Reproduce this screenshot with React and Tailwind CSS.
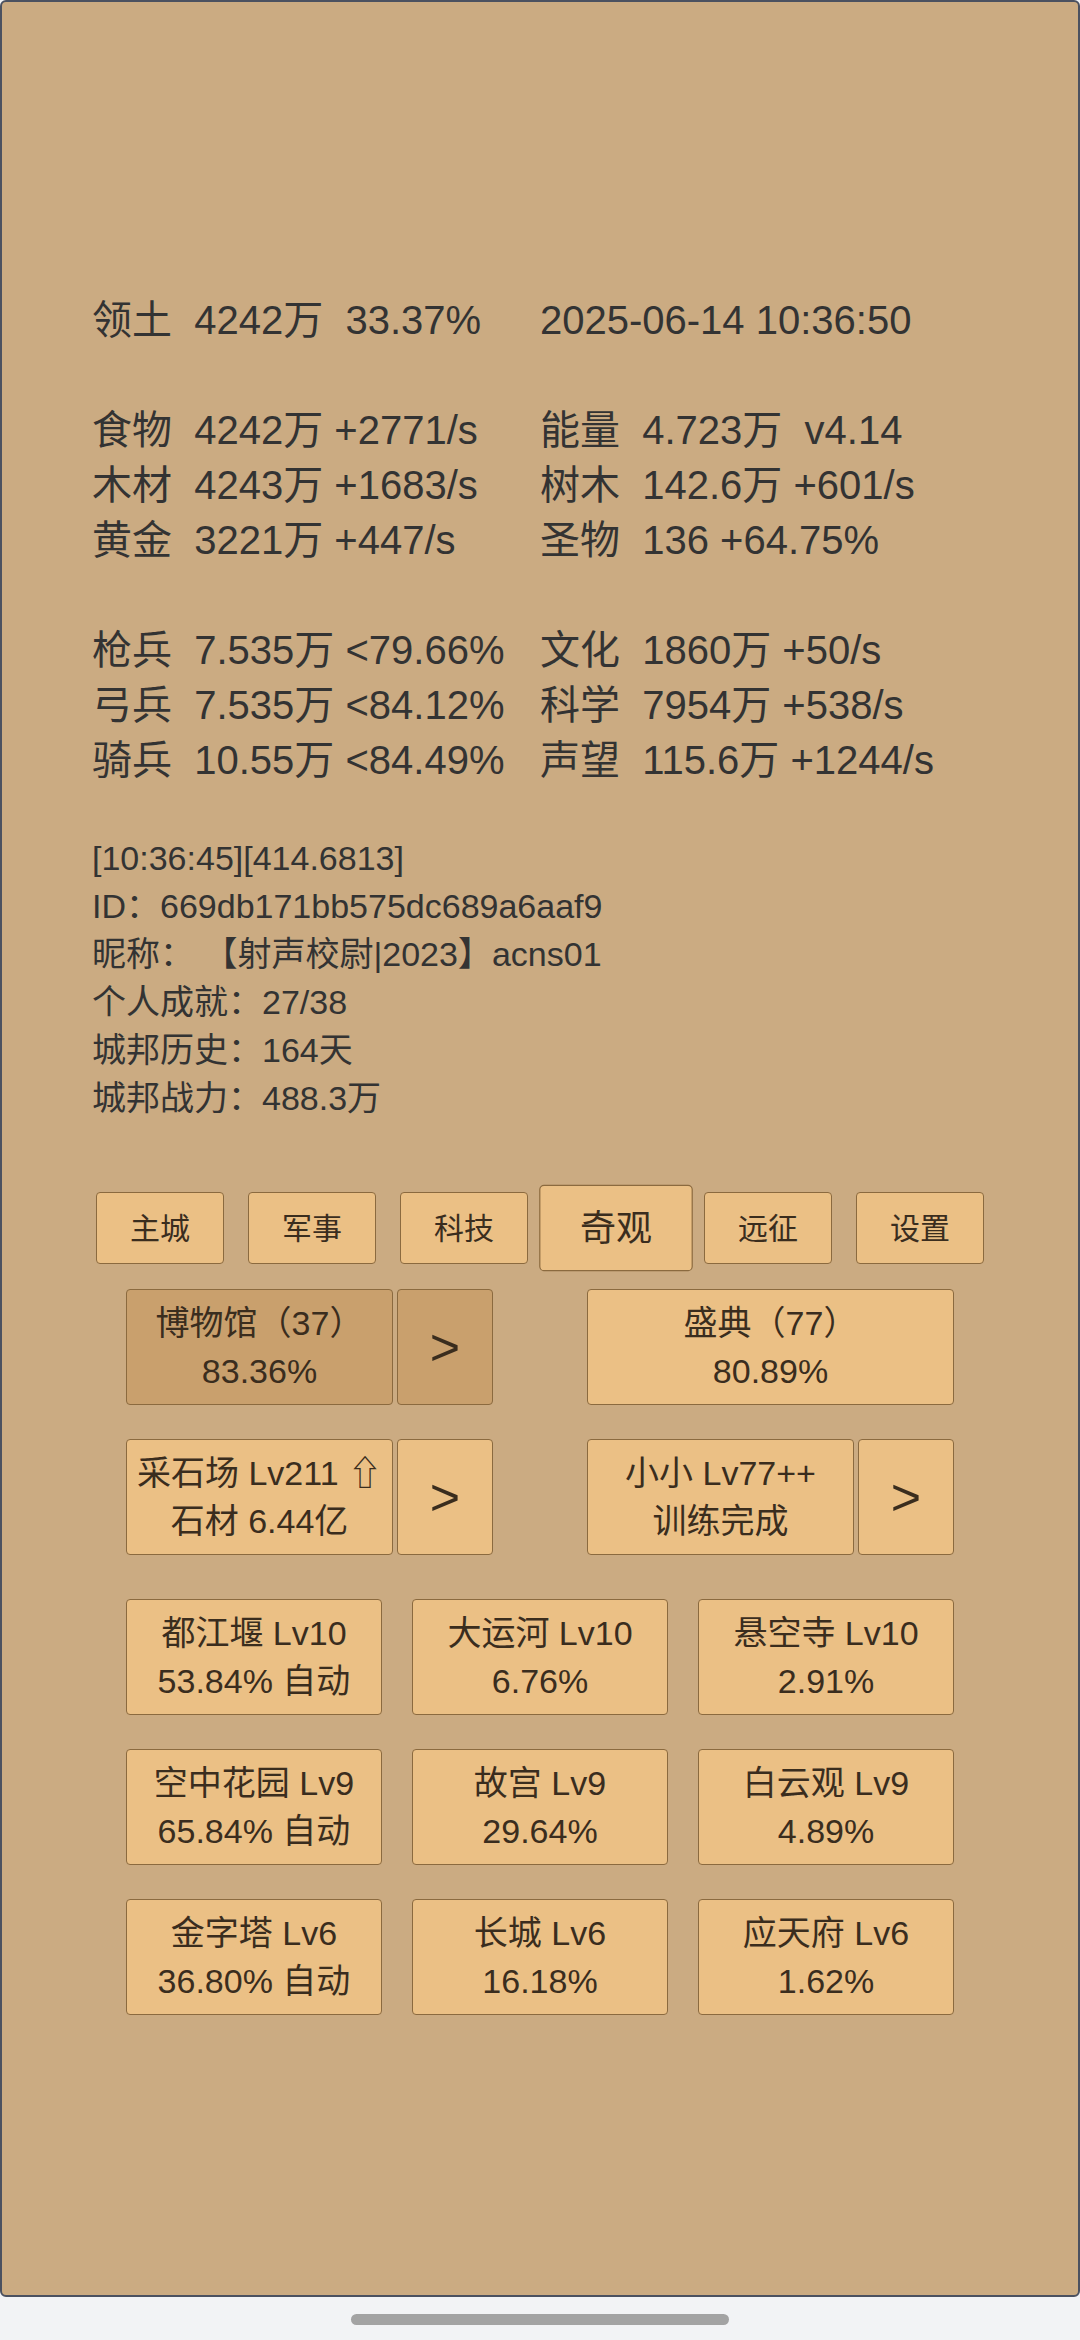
const font = { fontFamily: '"Liberation Sans", "Noto Sans CJK SC", sans-serif' };

const stats = [
  ['领土  4242万  33.37%', '2025-06-14 10:36:50'],
  null,
  ['食物  4242万 +2771/s', '能量  4.723万  v4.14'],
  ['木材  4243万 +1683/s', '树木  142.6万 +601/s'],
  ['黄金  3221万 +447/s', '圣物  136 +64.75%'],
  null,
  ['枪兵  7.535万 <79.66%', '文化  1860万 +50/s'],
  ['弓兵  7.535万 <84.12%', '科学  7954万 +538/s'],
  ['骑兵  10.55万 <84.49%', '声望  115.6万 +1244/s'],
];

const info = [
  '[10:36:45][414.6813]',
  'ID：669db171bb575dc689a6aaf9',
  '昵称： 【射声校尉|2023】acns01',
  '个人成就：27/38',
  '城邦历史：164天',
  '城邦战力：488.3万',
];

const tabs = ['主城', '军事', '科技', '奇观', '远征', '设置'];

const wonders = [
  ['都江堰 Lv10', '53.84% 自动'],
  ['大运河 Lv10', '6.76%'],
  ['悬空寺 Lv10', '2.91%'],
  ['空中花园 Lv9', '65.84% 自动'],
  ['故宫 Lv9', '29.64%'],
  ['白云观 Lv9', '4.89%'],
  ['金字塔 Lv6', '36.80% 自动'],
  ['长城 Lv6', '16.18%'],
  ['应天府 Lv6', '1.62%'],
];

const Box = ({ lines, dark, className }) => (
  <div
    className={
      'h-[116px] flex flex-col items-center justify-center border border-[#8b6a3f] rounded-[4px] text-[34px] leading-[48px] text-[#3a2d1e] whitespace-nowrap ' +
      (dark ? 'bg-[#c9a06d] ' : 'bg-[#ebc085] ') +
      className
    }
  >
    {lines.map((l, i) => (
      <div key={i}>{l}</div>
    ))}
  </div>
);

const Arrow = ({ dark }) => (
  <div
    className={
      'w-[96px] h-[116px] flex items-center justify-center border border-[#8b6a3f] rounded-[4px] text-[52px] text-[#3a2d1e] ' +
      (dark ? 'bg-[#c9a06d]' : 'bg-[#ebc085]')
    }
  >
    &gt;
  </div>
);

export default function App() {
  return (
    <div className="min-h-[2340px] bg-[#f2f3f5] flex flex-col" style={font}>
      <div className="h-[2297px] bg-[#cbab82] border-2 border-[#4b5160] rounded-[6px] text-[#333333]">
        {/* stats */}
        <div className="pt-[291px] px-[90px] text-[40px] leading-[55px] whitespace-pre">
          {stats.map((row, i) =>
            row ? (
              <div key={i} className="grid grid-cols-2">
                <div>{row[0]}</div>
                <div>{row[1]}</div>
              </div>
            ) : (
              <div key={i} className="h-[55px]"></div>
            )
          )}
        </div>

        {/* info */}
        <div className="mt-[46px] px-[90px] text-[34px] leading-[48px] whitespace-pre">
          {info.map((l, i) => (
            <div key={i}>{l}</div>
          ))}
        </div>

        {/* tabs */}
        <div className="mt-[70px] flex justify-center gap-[24px]">
          {tabs.map((t) => (
            <div
              key={t}
              className={
                'w-[128px] h-[72px] flex items-center justify-center bg-[#ebc085] border border-[#8b6a3f] rounded-[4px] text-[30px] text-[#3a2d1e] ' +
                (t === '奇观' ? 'scale-[1.2]' : '')
              }
            >
              {t}
            </div>
          ))}
        </div>

        {/* buildings */}
        <div className="mt-[25px] flex flex-col gap-[34px]">
          <div className="flex justify-center gap-[94px]">
            <div className="flex gap-[4px]">
              <Box lines={['博物馆（37）', '83.36%']} dark className="w-[267px]" />
              <Arrow dark />
            </div>
            <Box lines={['盛典（77）', '80.89%']} className="w-[367px]" />
          </div>
          <div className="flex justify-center gap-[94px]">
            <div className="flex gap-[4px]">
              <Box lines={['采石场 Lv211 ⇧', '石材 6.44亿']} className="w-[267px]" />
              <Arrow />
            </div>
            <div className="flex gap-[4px]">
              <Box lines={['小小 Lv77++', '训练完成']} className="w-[267px]" />
              <Arrow />
            </div>
          </div>
        </div>

        <div className="mt-[44px] mx-auto w-[828px] grid grid-cols-3 gap-x-[30px] gap-y-[34px]">
          {wonders.map((w, i) => (
            <Box key={i} lines={w} className="" />
          ))}
        </div>
      </div>
      <div className="flex justify-center pt-[17px]">
        <div className="w-[378px] h-[11px] rounded-full bg-[#a3a3a3]"></div>
      </div>
    </div>
  );
}
